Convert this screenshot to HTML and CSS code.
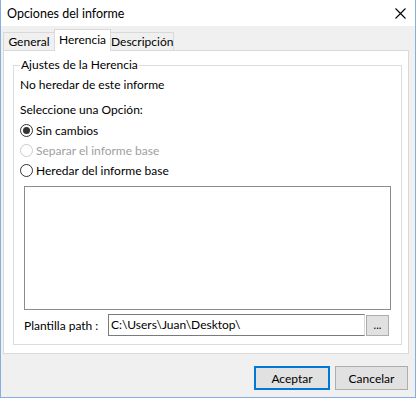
FILE: index.html
```html
<!DOCTYPE html>
<html lang="es">
<head>
    <meta charset="UTF-8">
    <meta name="viewport" content="width=device-width, initial-scale=1.0">
    <title>Opciones del informe</title>
    <link rel="stylesheet" href="styles.css">
</head>
<body>
    <div class="window">
        <div class="titlebar">
            <span class="title">Opciones del informe</span>
            <svg class="close" width="11" height="11" viewBox="0 0 11 11">
                <path d="M0.5 0.5 L10.5 10.5 M10.5 0.5 L0.5 10.5" stroke="#000" stroke-width="1.1" fill="none"/>
            </svg>
        </div>

        <div class="dialog-body">
            <div class="tabs">
                <div class="tab tab-general">General</div>
                <div class="tab tab-herencia active">Herencia</div>
                <div class="tab tab-desc">Descripción</div>
            </div>

            <div class="tab-panel">
                <fieldset class="group">
                    <legend>Ajustes de la Herencia</legend>
                    <div class="line">No heredar de este informe</div>
                    <div class="line">Seleccione una Opción:</div>
                    <div class="radio-row">
                        <span class="radio checked"></span>
                        <span>Sin cambios</span>
                    </div>
                    <div class="radio-row disabled">
                        <span class="radio"></span>
                        <span>Separar el informe base</span>
                    </div>
                    <div class="radio-row">
                        <span class="radio"></span>
                        <span>Heredar del informe base</span>
                    </div>
                    <div class="list-box"></div>
                    <div class="path-row">
                        <span class="path-label">Plantilla path :</span>
                        <div class="path-input">C:\Users\Juan\Desktop\</div>
                        <button class="browse-btn">...</button>
                    </div>
                </fieldset>
            </div>

            <div class="button-row">
                <button class="dlg-btn default">Aceptar</button>
                <button class="dlg-btn">Cancelar</button>
            </div>
        </div>
    </div>
</body>
</html>
```

FILE: styles.css
```css
body {
    margin: 0;
    font-family: Lato, "Noto Sans", sans-serif;
    font-size: 12px;
    color: #000000;
    background-color: #ffffff;
}
.window {
    width: 416px;
    height: 398px;
    box-sizing: border-box;
    border: 1px solid #86aee0;
    border-top: none;
    display: flex;
    flex-direction: column;
}
.titlebar {
    height: 26px;
    flex-shrink: 0;
    background-color: #ffffff;
    display: flex;
    align-items: center;
    justify-content: space-between;
    padding: 0 9px 0 6px;
}
.title {
    font-size: 12.5px;
}
.close {
    display: block;
}
.dialog-body {
    flex: 1;
    background-color: #f0f0f0;
    padding: 3px 6px 0 2px;
    display: flex;
    flex-direction: column;
}
.tabs {
    display: flex;
    align-items: flex-end;
    height: 21px;
}
.tab {
    height: 18px;
    box-sizing: border-box;
    border: 1px solid #d9d9d9;
    border-bottom: none;
    background-color: #f0f0f0;
    text-align: center;
    line-height: 18px;
}
.tab-general {
    width: 52px;
}
.tab-herencia {
    width: 57px;
    margin: 0 -1px;
}
.tab-desc {
    width: 64px;
}
.tab.active {
    height: 22px;
    background-color: #ffffff;
    line-height: 19px;
    margin-bottom: -1px;
    position: relative;
    z-index: 1;
}
.tab-panel {
    height: 304px;
    box-sizing: border-box;
    border: 1px solid #d9d9d9;
    background-color: #ffffff;
    padding: 7px 6px 8px 9px;
}
.group {
    margin: 0;
    height: 100%;
    box-sizing: border-box;
    border: 1px solid #dcdcdc;
    padding: 3px 10px 0 6px;
    min-inline-size: 0;
}
.group legend {
    padding: 0 1px;
    line-height: 14px;
}
.line {
    height: 20px;
    line-height: 20px;
    margin-bottom: 5px;
}
.line + .line {
    margin-bottom: 0;
}
.radio-row {
    height: 20px;
    display: flex;
    align-items: center;
    gap: 3px;
}
.radio {
    width: 13px;
    height: 13px;
    box-sizing: border-box;
    border: 1px solid #333333;
    border-radius: 50%;
    display: flex;
    align-items: center;
    justify-content: center;
}
.radio.checked::after {
    content: '';
    width: 7px;
    height: 7px;
    border-radius: 50%;
    background-color: #333333;
}
.radio-row.disabled {
    color: #a0a0a0;
}
.radio-row.disabled .radio {
    border-color: #cccccc;
}
.list-box {
    height: 124px;
    margin: 6px 0 0 4px;
    box-sizing: border-box;
    border: 1px solid #8c8c8c;
    background-color: #ffffff;
}
.path-row {
    display: flex;
    align-items: center;
    margin: 3px 0 0 4px;
    height: 24px;
}
.path-label {
    width: 84px;
}
.path-input {
    width: 257px;
    height: 22px;
    box-sizing: border-box;
    border: 1px solid #7a7a7a;
    border-right-color: #d9d9d9;
    padding-left: 2px;
    line-height: 20px;
}
.browse-btn {
    width: 23px;
    height: 21px;
    margin-left: 1px;
    border: 1px solid #adadad;
    background-color: #e1e1e1;
    font-family: inherit;
    font-size: 11px;
    padding: 0;
    line-height: 14px;
}
.button-row {
    display: flex;
    justify-content: flex-end;
    gap: 5px;
    margin: 12px 1px 0 0;
}
.dlg-btn {
    width: 73px;
    height: 24px;
    box-sizing: border-box;
    border: 1px solid #adadad;
    background-color: #e1e1e1;
    font-family: inherit;
    font-size: 12px;
    padding: 0;
    color: #000000;
}
.dlg-btn.default {
    width: 76px;
    border: 2px solid #0078d7;
}
```
